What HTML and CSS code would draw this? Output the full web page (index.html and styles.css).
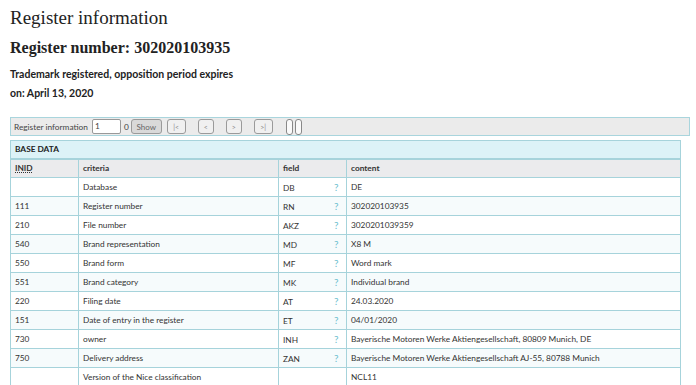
FILE: index.html
```html
<!DOCTYPE html>
<html>
<head>
<meta charset="utf-8">
<link rel="stylesheet" href="styles.css">
</head>
<body>
<div class="page">
  <h1 class="title">Register information</h1>
  <h2 class="subtitle">Register number: 302020103935</h2>
  <p class="status">Trademark registered, opposition period expires<br>on: April 13, 2020</p>

  <div class="toolbar">
    <span class="tb-label">Register information</span>
    <span class="tb-input">1</span>
    <span class="tb-count">0</span>
    <span class="tb-btn tb-show">Show</span>
    <span class="tb-btn tb-nav tb-wide">|&lt;</span>
    <span class="tb-btn tb-nav tb-gap">&lt;</span>
    <span class="tb-btn tb-nav tb-gap">&gt;</span>
    <span class="tb-btn tb-nav tb-wide tb-gap">&gt;|</span>
    <span class="tb-pill tb-gap"></span>
    <span class="tb-pill"></span>
  </div>

  <table class="data">
    <colgroup>
      <col class="c-inid"><col class="c-crit"><col class="c-field"><col class="c-content">
    </colgroup>
    <tr class="section"><th colspan="4">BASE DATA</th></tr>
    <tr class="head"><th><abbr>INID</abbr></th><th>criteria</th><th>field</th><th>content</th></tr>
    <tr><td></td><td>Database</td><td><span class="f">DB</span><span class="q">?</span></td><td>DE</td></tr>
    <tr class="alt"><td>111</td><td>Register number</td><td><span class="f">RN</span><span class="q">?</span></td><td>302020103935</td></tr>
    <tr><td>210</td><td>File number</td><td><span class="f">AKZ</span><span class="q">?</span></td><td>3020201039359</td></tr>
    <tr class="alt"><td>540</td><td>Brand representation</td><td><span class="f">MD</span><span class="q">?</span></td><td>X8 M</td></tr>
    <tr><td>550</td><td>Brand form</td><td><span class="f">MF</span><span class="q">?</span></td><td>Word mark</td></tr>
    <tr class="alt"><td>551</td><td>Brand category</td><td><span class="f">MK</span><span class="q">?</span></td><td>Individual brand</td></tr>
    <tr><td>220</td><td>Filing date</td><td><span class="f">AT</span><span class="q">?</span></td><td>24.03.2020</td></tr>
    <tr class="alt"><td>151</td><td>Date of entry in the register</td><td><span class="f">ET</span><span class="q">?</span></td><td>04/01/2020</td></tr>
    <tr><td>730</td><td>owner</td><td><span class="f">INH</span><span class="q">?</span></td><td>Bayerische Motoren Werke Aktiengesellschaft, 80809 Munich, DE</td></tr>
    <tr class="alt"><td>750</td><td>Delivery address</td><td><span class="f">ZAN</span><span class="q">?</span></td><td>Bayerische Motoren Werke Aktiengesellschaft AJ-55, 80788 Munich</td></tr>
    <tr><td></td><td>Version of the Nice classification</td><td></td><td>NCL11</td></tr>
  </table>
</div>
</body>
</html>
```

FILE: styles.css
```css
html, body {
  margin: 0;
  padding: 0;
  background: #ffffff;
}
.page {
  padding: 7px 8px 0 10px;
  color: #222;
}
.title {
  font-family: "Liberation Serif", "DejaVu Serif", serif;
  font-weight: normal;
  font-size: 19px;
  line-height: 22px;
  margin: 0 0 9px 0;
  color: #222;
}
.subtitle {
  font-family: "Liberation Serif", "DejaVu Serif", serif;
  font-weight: bold;
  font-size: 16px;
  line-height: 20px;
  margin: 0 0 7px 0;
  color: #222;
}
.status {
  font-family: "Lato", "Open Sans", sans-serif;
  font-weight: bold;
  font-size: 10.5px;
  line-height: 19px;
  margin: 0 0 14px 0;
  color: #222;
}
.toolbar {
  display: flex;
  align-items: center;
  height: 17px;
  width: 675px;
  background: #ebebeb;
  border: 1px solid #a9d5dd;
  font-family: "Lato", "Open Sans", sans-serif;
  font-size: 8.3px;
  color: #444;
  padding-left: 3px;
  box-sizing: content-box;
  margin-bottom: 4px;
}
.tb-label {
  margin-right: 4px;
}
.tb-input {
  width: 25px;
  height: 13px;
  background: #fff;
  border: 1px solid #999;
  border-radius: 2px;
  padding-left: 2px;
  line-height: 13px;
  margin-right: 3px;
}
.tb-count {
  margin-right: 2px;
}
.tb-btn {
  display: inline-flex;
  align-items: center;
  justify-content: center;
  height: 13px;
  border: 1px solid #9a9a9a;
  border-radius: 3px;
  background: #f2f2f2;
  color: #888;
  font-size: 7px;
}
.tb-show {
  width: 29px;
  background: #d9d9d9;
  color: #666;
  font-size: 8px;
  margin-right: 5px;
}
.tb-nav {
  width: 14px;
  background: #f0f0f0;
}
.tb-wide {
  width: 17px;
}
.tb-gap {
  margin-left: 12px;
}
.tb-pill {
  display: inline-block;
  width: 5px;
  height: 14px;
  border: 1px solid #888;
  border-radius: 3px;
  background: #fafafa;
  margin-left: 2px;
}
.tb-pill.tb-gap {
  margin-left: 13px;
}
.data {
  border-collapse: collapse;
  width: 671px;
  font-family: "Lato", "Open Sans", sans-serif;
  font-size: 8.3px;
  color: #333;
}
.c-inid { width: 68px; }
.c-crit { width: 200px; }
.c-field { width: 68px; }
.data th, .data td {
  border: 1px solid #a6d3db;
  height: 19px;
  padding: 0 4px;
  text-align: left;
  box-sizing: border-box;
  white-space: nowrap;
}
.data .section th {
  background: #dcf2f7;
  font-weight: bold;
  color: #222;
  height: 18px;
  border-bottom: 2px solid #a6d3db;
}
.data .head th {
  background: #ebebed;
  font-weight: bold;
  color: #333;
  height: 19px;
}
.data abbr {
  text-decoration: underline dotted;
}
.data tr.alt td {
  background: #f6fbfc;
}
.f {
  display: inline-block;
  width: 51px;
}
.q {
  color: #6cc0cf;
  font-size: 10px;
}
```
